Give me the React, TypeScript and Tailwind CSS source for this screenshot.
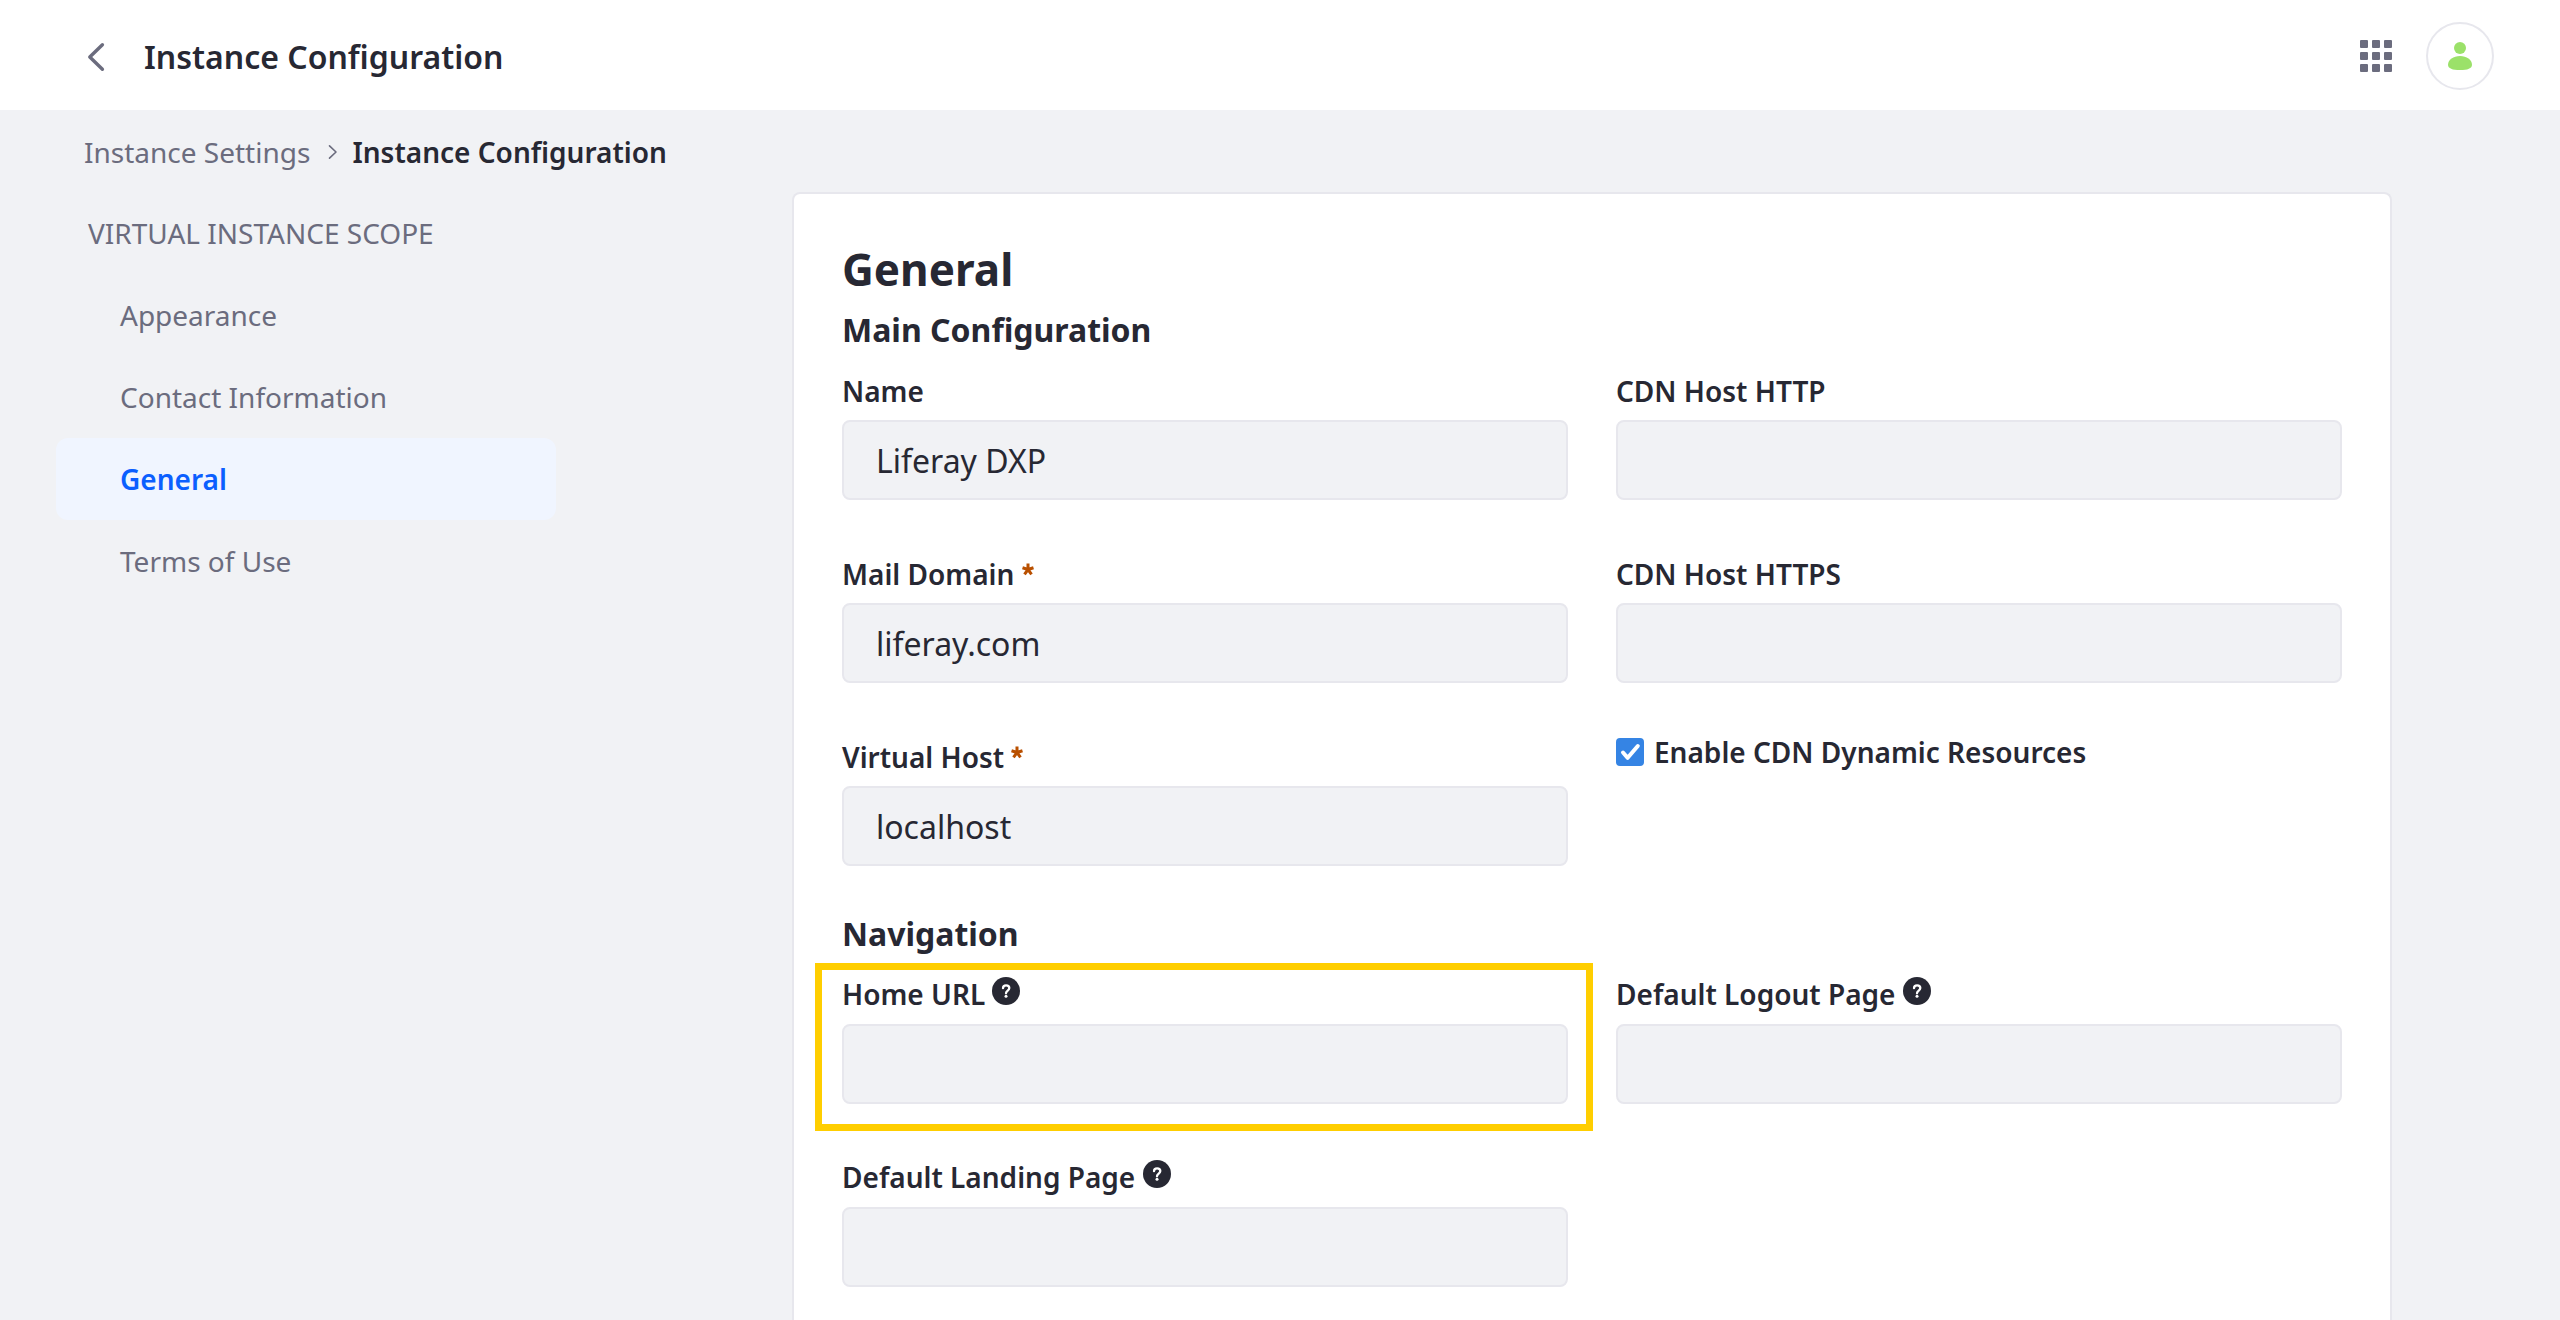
import type { ReactNode } from "react";

function ChevronLeft() {
  return (
    <svg className="size-8" viewBox="0 0 32 32" fill="none" stroke="currentColor" strokeWidth="3.4" strokeLinecap="round" strokeLinejoin="round" aria-hidden="true">
      <path d="M22.4 4.700 9.800 17 22.400 29.300" />
    </svg>
  );
}

function BreadcrumbChevron() {
  return (
    <svg className="ml-[18px] mr-[14px] h-4 w-[10px]" viewBox="0 0 10 16" fill="none" stroke="currentColor" strokeWidth="1.6" strokeLinecap="round" strokeLinejoin="round" aria-hidden="true">
      <path d="M1.5 1.8 8 8 1.5 14.2" />
    </svg>
  );
}

function AppsIcon() {
  const steps = [0, 12, 24];
  return (
    <svg className="size-8" viewBox="0 0 32 32" fill="currentColor" aria-hidden="true">
      {steps.map((y) => steps.map((x) => <rect key={`${x}-${y}`} x={x} y={y} width="8" height="8" rx="1" />))}
    </svg>
  );
}

function UserIcon() {
  return (
    <svg className="h-7 w-6" viewBox="0 0 24 28" fill="currentColor" aria-hidden="true">
      <circle cx="12" cy="6" r="6" />
      <path d="M12 14c6.6 0 12 3.9 12 8.700C24 26.500 19.500 28 12 28S0 26.500 0 22.700C0 17.900 5.400 14 12 14Z" />
    </svg>
  );
}

function HelpIcon() {
  return (
    <svg className="inline-block size-7 align-baseline" viewBox="0 0 28 28" role="img" aria-label="Help">
      <circle cx="14" cy="14" r="14" fill="#272833" />
      <path d="M11 11.200C11 9.300 12.300 8.300 14.100 8.300S17.300 9.400 17.300 11.100C17.300 13.500 14 13.600 14 16.300" fill="none" stroke="#fff" strokeWidth="2.300" strokeLinecap="round" />
      <circle cx="14" cy="19.300" r="1.500" fill="#fff" />
    </svg>
  );
}

function RequiredMark() {
  return (
    <svg className="inline-block h-[22px] w-3 align-baseline" viewBox="0 0 12 22" role="img" aria-label="Required">
      <path d="M6 .4V6.500M.5 4.700 6 6.500M11.500 4.700 6 6.500M2.500 11.300 6 6.500M9.500 11.300 6 6.500" fill="none" stroke="#b95000" strokeWidth="3" />
    </svg>
  );
}

type FieldProps = { id: string; label: string; value?: string; required?: boolean; help?: boolean; highlighted?: boolean };

function Field({ id, label, value = "", required, help, highlighted }: FieldProps) {
  return (
    <div className="relative">
      <label htmlFor={id} className={help ? "mb-2 block h-[42px] text-[28px] leading-10 font-semibold" : "mb-2 block h-[42px] text-[28px] leading-[42px] font-semibold"}>
        {label} {required && <RequiredMark />}
        {help && <HelpIcon />}
      </label>
      <input
        id={id}
        type="text"
        defaultValue={value}
        className="block h-20 w-full rounded-lg border-2 border-[#e7e7ed] bg-[#f1f2f5] px-8 text-[32px] outline-none"
      />
      {highlighted && <div className="pointer-events-none absolute -top-[11px] -right-[25px] -bottom-[27px] -left-[27px] border-7 border-[#ffce00]" />}
    </div>
  );
}

function Section({ title, children }: { title: string; children: ReactNode }) {
  return (
    <section>
      <h3 className="mb-[18px] text-[32px] leading-[44px] font-bold">{title}</h3>
      <div className="grid grid-cols-2 gap-x-12 gap-y-[53px]">{children}</div>
    </section>
  );
}

const scopes = ["Appearance", "Contact Information", "General", "Terms of Use"];

export default function App() {
  return (
    <div className="flex min-h-screen flex-col bg-[#f1f2f5] font-['Noto_Sans',sans-serif] text-[#272833]">
      <header className="flex items-center bg-white pt-[22px] pr-[66px] pb-5 pl-20">
        <a href="#back" aria-label="Back" className="text-[#6b6c7e]">
          <ChevronLeft />
        </a>
        <h1 className="ml-8 pt-0.5 text-[32px] leading-[44px] font-semibold">Instance Configuration</h1>
        <div className="ml-auto flex items-center gap-[34px]">
          <button type="button" aria-label="Applications" className="text-[#6b6c7e]">
            <AppsIcon />
          </button>
          <button type="button" aria-label="User profile" className="flex size-[68px] items-center justify-center rounded-full border-2 border-[#e7e7ed] text-[#9be169]">
            <UserIcon />
          </button>
        </div>
      </header>

      <nav aria-label="Breadcrumb" className="flex items-center px-[84px] pt-[21px] pb-[19px] text-[28px] leading-[42px] text-[#6b6c7e]">
        <a href="#instance-settings">Instance Settings</a>
        <BreadcrumbChevron />
        <span className="font-semibold text-[#272833]">Instance Configuration</span>
      </nav>

      <div className="flex flex-1">
        <nav aria-label="Virtual instance scope" className="mr-[68px] ml-14 w-[500px] shrink-0 text-[28px] leading-[42px] text-[#6b6c7e]">
          <h2 className="px-8 py-5 uppercase">Virtual Instance Scope</h2>
          <ul>
            {scopes.map((scope) => (
              <li key={scope}>
                <a
                  href={`#${scope}`}
                  className={scope === "General" ? "block rounded-xl bg-[#f0f5ff] px-16 py-5 font-semibold text-[#0b5fff]" : "block rounded-xl px-16 py-5"}
                >
                  {scope}
                </a>
              </li>
            ))}
          </ul>
        </nav>

        <div className="flex flex-1 justify-center">
          <main className="w-full max-w-[1600px] rounded-t-lg border-2 border-b-0 border-[#e7e7ed] bg-white px-12 pt-12 pb-8">
            <h2 className="mb-3 text-[44px] leading-[54px] font-bold">General</h2>
            <form className="flex flex-col gap-[46px]">
              <Section title="Main Configuration">
                <Field id="name" label="Name" value="Liferay DXP" />
                <Field id="cdn-http" label="CDN Host HTTP" />
                <Field id="mail-domain" label="Mail Domain" value="liferay.com" required />
                <Field id="cdn-https" label="CDN Host HTTPS" />
                <Field id="virtual-host" label="Virtual Host" value="localhost" required />
                <label className="flex items-center gap-[10px] self-start text-[28px] leading-8 font-semibold">
                  <span className="relative size-7">
                    <input type="checkbox" defaultChecked className="peer block size-7 appearance-none rounded-[4px] border-2 border-[#8f8f9d] checked:border-[#3584e4] checked:bg-[#3584e4]" />
                    <svg className="pointer-events-none absolute inset-0 hidden size-7 peer-checked:block" viewBox="0 0 28 28" fill="none" stroke="#fff" strokeWidth="4" strokeLinecap="round" strokeLinejoin="round" aria-hidden="true">
                      <path d="M7 14.500 11.700 19.800 21.800 8" />
                    </svg>
                  </span>
                  Enable CDN Dynamic Resources
                </label>
              </Section>
              <Section title="Navigation">
                <Field id="home-url" label="Home URL" help highlighted />
                <Field id="logout-page" label="Default Logout Page" help />
                <Field id="landing-page" label="Default Landing Page" help />
              </Section>
            </form>
          </main>
        </div>
      </div>
    </div>
  );
}
